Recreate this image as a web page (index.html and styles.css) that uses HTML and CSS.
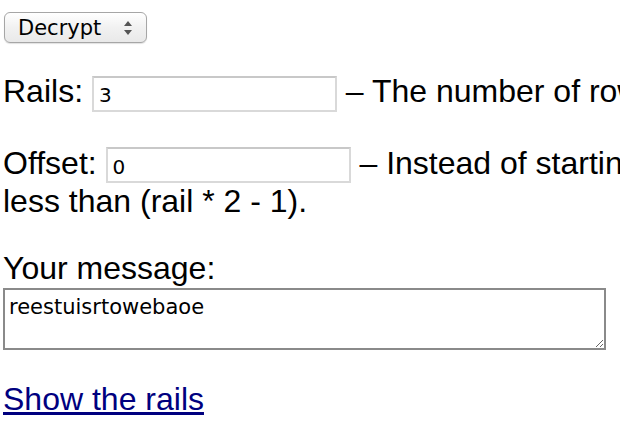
FILE: index.html
```html
<!DOCTYPE html>
<html>
<head>
<meta charset="utf-8">
<link rel="stylesheet" href="styles.css">
</head>
<body>
<form class="cipher">
  <div class="select-wrap">
    <select class="mode">
      <option>Decrypt</option>
      <option>Encrypt</option>
    </select>
    <svg class="arrows" width="10" height="16" viewBox="0 0 10 16"><path d="M5 1 L9 6 L1 6 Z M5 15 L9 10 L1 10 Z" fill="#555"/></svg>
  </div>
  <p class="field rails">Rails: <input class="num" type="text" value="3"> – The number of rows the message is written across.</p>
  <p class="field offset">Offset: <input class="num" type="text" value="0"> – Instead of starting on the first rail, start at this offset. It must be<br>less than (rail * 2 - 1).</p>
  <label class="msg-label" for="msg">Your message:</label>
  <textarea id="msg" class="msg">reestuisrtowebaoe</textarea>
  <p class="link-row"><a href="#">Show the rails</a></p>
</form>
</body>
</html>
```

FILE: styles.css
```css
html { overflow: hidden; background: #fff; }
body {
  margin: 12px 3px;
  font-family: "Liberation Sans", Arial, sans-serif;
  font-size: 32px;
  color: #000;
  width: 1400px;
}
.cipher { display: block; }
.select-wrap {
  position: relative;
  display: inline-block;
  vertical-align: top;
  margin-left: 1px;
}
.mode {
  appearance: none;
  -webkit-appearance: none;
  width: 143px;
  height: 31px;
  border: 1px solid #a6a6a6;
  border-radius: 6px;
  background: linear-gradient(#ffffff, #f1f1f1 50%, #e9e9e9);
  font-family: "DejaVu Sans", sans-serif;
  font-size: 21px;
  color: #000;
  padding: 0 0 0 13px;
  box-shadow: 0 1px 1px rgba(0,0,0,0.12);
  display: block;
}
.arrows {
  position: absolute;
  right: 14px;
  top: 8px;
}
.field {
  margin: 0;
  line-height: 36px;
}
.rails { margin-top: 24px; }
.offset { margin-top: 33px; }
.num {
  width: 245px;
  height: 36px;
  box-sizing: border-box;
  border: 2px solid #d9d9d9;
  border-top-color: #c8c8c8;
  font-family: "DejaVu Sans", sans-serif;
  font-size: 20px;
  padding: 3px 5px 0;
  margin: 0;
  vertical-align: baseline;
}
.msg-label {
  display: block;
  margin-top: 31px;
  line-height: 36px;
}
.msg {
  display: block;
  box-sizing: border-box;
  width: 603px;
  height: 62px;
  border: 2px solid #8a8a8a;
  font-family: "DejaVu Sans", sans-serif;
  font-size: 21px;
  padding: 5px 4px;
  margin: 2px 0 0;
  resize: both;
}
.link-row {
  margin: 31px 0 0;
  line-height: 36px;
}
.link-row a { color: #00007f; text-decoration: underline; }
```
